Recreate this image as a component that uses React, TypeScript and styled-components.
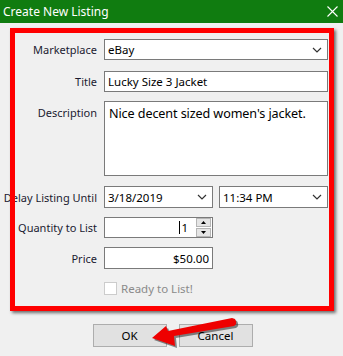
import * as React from 'react'
import styled, { createGlobalStyle } from 'styled-components'

const GlobalStyle = createGlobalStyle`
  html, body {
    margin: 0;
    padding: 0;
    background: #f0f0f0;
  }
  body {
    font-family: 'Noto Sans', 'Liberation Sans', sans-serif;
    font-size: 11px;
    color: #1b1b30;
  }
`

const Window = styled.div`
  position: relative;
  width: 343px;
  height: 356px;
  background: #f0f0f0;
  display: flex;
  flex-direction: column;
  overflow: hidden;
`

const TitleBar = styled.div`
  height: 23px;
  background: #107c10;
  color: #fff;
  display: flex;
  align-items: center;
  justify-content: space-between;
  padding: 0 5px 0 3px;
  font-size: 12px;
`

const Body = styled.div`
  padding: 5px 9px 0 10px;
`

const Frame = styled.div`
  position: relative;
  width: 319px;
  padding: 11px 0 15px 5px;
  &::after {
    content: '';
    position: absolute;
    inset: 0;
    border: 5px solid #ff0000;
    box-shadow: 2px 2px 3px rgba(0, 0, 0, 0.55);
    pointer-events: none;
  }
`

const Row = styled.div<{ $gap?: number; $top?: boolean }>`
  display: grid;
  grid-template-columns: 82px 224px;
  column-gap: 7px;
  align-items: ${(p) => (p.$top ? 'start' : 'center')};
  margin-top: ${(p) => p.$gap ?? 0}px;
`

const Label = styled.label<{ $pad?: number }>`
  justify-self: end;
  white-space: nowrap;
  padding-top: ${(p) => p.$pad ?? 0}px;
`

const Box = styled.div<{ $w?: number; $h?: number; $align?: string }>`
  box-sizing: border-box;
  width: ${(p) => (p.$w ? `${p.$w}px` : '100%')};
  height: ${(p) => p.$h ?? 21}px;
  background: #fff;
  border: 1px solid #7a7a7a;
  display: flex;
  align-items: center;
  justify-content: ${(p) => p.$align ?? 'flex-start'};
  padding: 0 3px;
  color: #000;
  font-size: 11.5px;
  white-space: nowrap;
`

const TextArea = styled.div`
  box-sizing: border-box;
  height: 75px;
  background: #fff;
  border: 1px solid #7a7a7a;
  padding: 3px 4px;
  font-size: 12.6px;
  letter-spacing: -0.1px;
  white-space: nowrap;
  color: #000;
`

const Chevron = styled.svg`
  margin-left: auto;
  margin-right: 2px;
`

const Pair = styled.div`
  display: flex;
  gap: 6px;
`

const SpinValue = styled.div`
  display: flex;
  align-items: center;
  margin-left: auto;
`

const Spinner = styled.div`
  width: 15px;
  height: 19px;
  margin-left: 8px;
  margin-right: -2px;
  display: flex;
  flex-direction: column;
  gap: 1px;
`

const SpinBtn = styled.div`
  flex: 1;
  background: #e5e5e5;
  border: 1px solid #b5b5b5;
  display: flex;
  align-items: center;
  justify-content: center;
`

const Caret = styled.span`
  display: inline-block;
  width: 1px;
  height: 13px;
  background: #000;
  margin-right: 1px;
`

const CheckRow = styled.div`
  display: flex;
  align-items: center;
  gap: 4px;
  color: #8a8a8a;
  font-size: 11.5px;
`

const CheckBox = styled.span`
  box-sizing: border-box;
  width: 13px;
  height: 13px;
  border: 1px solid #cccccc;
  background: #fff;
`

const Buttons = styled.div`
  display: flex;
  justify-content: center;
  gap: 12px;
  margin-top: 13px;
  padding-left: 1px;
`

const Button = styled.div`
  box-sizing: border-box;
  width: 74px;
  height: 23px;
  background: #e1e1e1;
  border: 1px solid #adadad;
  display: flex;
  align-items: center;
  justify-content: center;
  color: #000;
  font-size: 11.5px;
`

const Arrow = styled.svg`
  position: absolute;
  left: 146px;
  top: 312px;
  pointer-events: none;
`

const ChevronIcon = () => (
  <Chevron width="10" height="6" viewBox="0 0 10 6">
    <path d="M1 1 L5 5 L9 1" fill="none" stroke="#333" strokeWidth="1.2" />
  </Chevron>
)

const arrowPath = 'M89 7 Q92 12 88 14 L28 24 L29 34 L6 26 L20 14 L22 19 L86 6 Z'

export default function App() {
  return (
    <Window>
      <GlobalStyle />
      <TitleBar>
        <span>Create New Listing</span>
        <svg width="11" height="11" viewBox="0 0 11 11">
          <path d="M0.5 0.5 L10.5 10.5 M10.5 0.5 L0.5 10.5" stroke="#fff" strokeWidth="1.1" />
        </svg>
      </TitleBar>
      <Body>
        <Frame>
          <Row>
            <Label>Marketplace</Label>
            <Box>
              eBay
              <ChevronIcon />
            </Box>
          </Row>
          <Row $gap={11}>
            <Label>Title</Label>
            <Box>Lucky Size 3 Jacket</Box>
          </Row>
          <Row $gap={9} $top>
            <Label $pad={4}>Description</Label>
            <TextArea>Nice decent sized women's jacket.</TextArea>
          </Row>
          <Row $gap={10}>
            <Label>Delay Listing Until</Label>
            <Pair>
              <Box $w={109} $h={22}>
                3/18/2019
                <ChevronIcon />
              </Box>
              <Box $w={109} $h={22}>
                11:34 PM
                <ChevronIcon />
              </Box>
            </Pair>
          </Row>
          <Row $gap={9}>
            <Label>Quantity to List</Label>
            <Box $w={109} $h={21}>
              <SpinValue>
                <Caret />1
              </SpinValue>
              <Spinner>
                <SpinBtn>
                  <svg width="5" height="3" viewBox="0 0 5 3">
                    <path d="M0 3 L2.5 0 L5 3 Z" fill="#000" />
                  </svg>
                </SpinBtn>
                <SpinBtn>
                  <svg width="5" height="3" viewBox="0 0 5 3">
                    <path d="M0 0 L2.5 3 L5 0 Z" fill="#000" />
                  </svg>
                </SpinBtn>
              </Spinner>
            </Box>
          </Row>
          <Row $gap={9}>
            <Label>Price</Label>
            <Box $w={109} $h={22} $align="flex-end">$50.00</Box>
          </Row>
          <Row $gap={12}>
            <span />
            <CheckRow>
              <CheckBox />
              Ready to List!
            </CheckRow>
          </Row>
        </Frame>
        <Buttons>
          <Button>OK</Button>
          <Button>Cancel</Button>
        </Buttons>
      </Body>
      <Arrow width="100" height="44" viewBox="0 0 100 44">
        <g transform="translate(2 2)" fill="rgba(0,0,0,0.45)">
          <path d={arrowPath} />
        </g>
        <path d={arrowPath} fill="#ee0000" />
      </Arrow>
    </Window>
  )
}
